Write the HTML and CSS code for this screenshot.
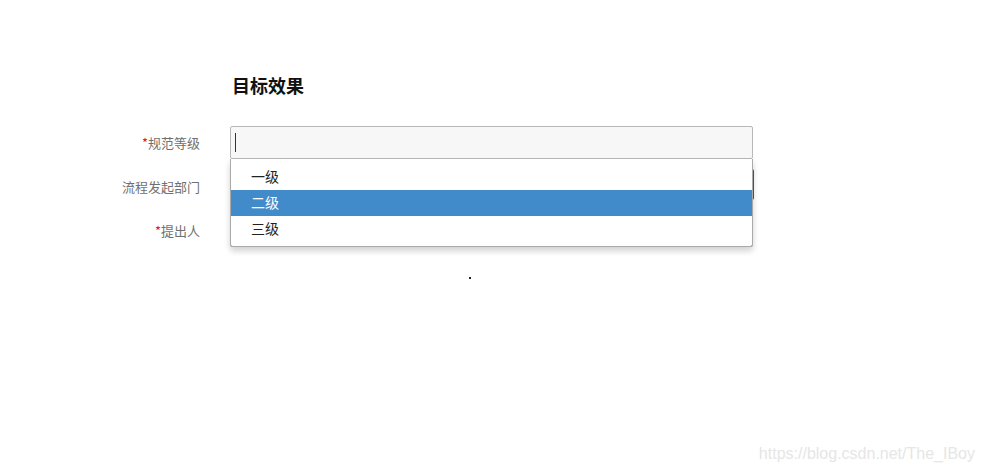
FILE: index.html
```html
<!DOCTYPE html>
<html lang="zh">
<head>
<meta charset="utf-8">
<title>目标效果</title>
<link rel="stylesheet" href="styles.css">
</head>
<body>
<div class="page">
  <h1 class="title">目标效果</h1>
  <div class="form">
    <div class="row">
      <label class="label"><span class="req">*</span>规范等级</label>
      <div class="field">
        <div class="input input-active"><span class="caret"></span></div>
        <ul class="dropdown">
          <li class="opt">一级</li>
          <li class="opt opt-hl">二级</li>
          <li class="opt">三级</li>
        </ul>
      </div>
    </div>
    <div class="row">
      <label class="label">流程发起部门</label>
      <div class="field"><div class="input input-focus"></div></div>
    </div>
    <div class="row">
      <label class="label"><span class="req">*</span>提出人</label>
      <div class="field"><div class="input"></div></div>
    </div>
  </div>
  <div class="dotline"><span class="dot"></span></div>
</div>
<div class="watermark">https://blog.csdn.net/The_IBoy</div>
</body>
</html>
```
FILE: styles.css
```css
html, body {
  margin: 0;
  padding: 0;
  background: #ffffff;
}
body {
  font-family: "Microsoft YaHei", "Noto Sans CJK SC", "Liberation Sans", sans-serif;
  width: 985px;
  height: 470px;
  position: relative;
  overflow: hidden;
}
.page {
  padding-top: 71px;
}
.title {
  margin: 0 0 27px 232px;
  font-size: 18px;
  line-height: 28px;
  font-weight: bold;
  color: #111;
}
.form {
  display: flex;
  flex-direction: column;
  gap: 11px;
}
.row {
  display: flex;
  align-items: center;
  height: 33px;
}
.label {
  width: 200px;
  text-align: right;
  font-size: 13px;
  color: #707070;
  line-height: 31px;
  margin-right: 30px;
}
.req {
  color: #e02020;
}
.field {
  position: relative;
  width: 523px;
  height: 33px;
}
.input {
  box-sizing: border-box;
  width: 523px;
  height: 33px;
  border: 1px solid #b8b8b8;
  background: #ffffff;
  border-radius: 2px;
}
.input-active {
  background: #f7f7f7;
  display: flex;
  align-items: center;
  padding-left: 4px;
}
.caret {
  display: block;
  width: 1px;
  height: 19px;
  background: #333;
}
.input-focus {
  width: 524px;
  height: 31px;
  margin-top: -1px;
  border-right: 2px solid #0e62d6;
}
.dropdown {
  position: absolute;
  left: 0;
  top: 33px;
  z-index: 5;
  box-sizing: border-box;
  width: 523px;
  margin: 0;
  padding: 5px 0 4px;
  list-style: none;
  background: #fff;
  border: 1px solid #aaaaaa;
  border-top: none;
  border-radius: 0 0 3px 3px;
  box-shadow: 0 4px 6px rgba(0, 0, 0, 0.18);
}
.opt {
  height: 26px;
  line-height: 24px;
  padding-left: 20px;
  font-size: 14px;
  color: #222;
}
.opt-hl {
  background: #418bca;
  color: #fff;
}
.dotline {
  display: flex;
  justify-content: flex-start;
  padding-left: 469px;
  margin-top: 30px;
}
.dot {
  display: block;
  width: 2px;
  height: 2px;
  background: #222;
}
.watermark {
  position: absolute;
  right: 10px;
  bottom: 7px;
  font-family: "Liberation Sans", Arial, sans-serif;
  font-size: 16px;
  color: #e6e6e6;
}
```
